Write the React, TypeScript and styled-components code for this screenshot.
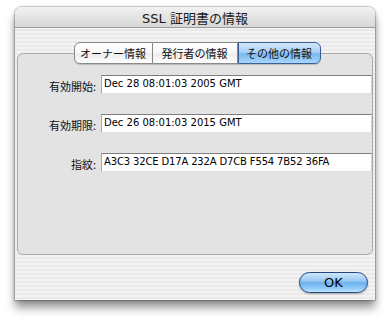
import React from 'react';
import styled, { createGlobalStyle } from 'styled-components';

const GlobalStyle = createGlobalStyle`
  html, body {
    margin: 0;
    padding: 0;
    background: #ffffff;
  }
  body {
    font-family: "Lucida Grande", "DejaVu Sans", "Noto Sans CJK JP", sans-serif;
  }
`;

const Page = styled.div`
  width: 390px;
  height: 317px;
  padding: 7px 0 0 15px;
  box-sizing: border-box;
  overflow: hidden;
`;

const Window = styled.div`
  width: 360px;
  height: 293px;
  border-radius: 7px 7px 0 0;
  background: repeating-linear-gradient(
    to bottom,
    #f3f3f3 0px,
    #f3f3f3 2px,
    #eaeaea 2px,
    #eaeaea 4px
  );
  box-shadow: 0 0 0 1px rgba(0, 0, 0, 0.15), 0 8px 10px rgba(0, 0, 0, 0.4),
    0 1px 4px rgba(0, 0, 0, 0.25);
  display: flex;
  flex-direction: column;
`;

const TitleBar = styled.div`
  height: 22px;
  border-radius: 7px 7px 0 0;
  background: linear-gradient(to bottom, #f2f2f2 0%, #e4e4e4 50%, #d8d8d8 100%);
  border-bottom: 1px solid #9c9c9c;
  display: flex;
  align-items: center;
  justify-content: center;
  font-size: 13px;
  color: #1a1a1a;
`;

const Body = styled.div`
  flex: 1;
  display: flex;
  flex-direction: column;
  padding: 14px 2px 7px 2px;
`;

const TabStrip = styled.div`
  display: flex;
  justify-content: center;
  margin: 0 0 -11px 4px;
  position: relative;
  z-index: 1;
`;

const Tab = styled.div<{ $active?: boolean; $first?: boolean; $last?: boolean }>`
  height: 20px;
  display: flex;
  align-items: center;
  justify-content: center;
  width: ${(p) => (p.$first ? '77px' : p.$last ? '81px' : '84px')};
  font-family: "Noto Sans CJK JP", sans-serif;
  font-size: 11px;
  color: #111;
  border: 1px solid ${(p) => (p.$active ? '#3b5f95' : '#8a8a8a')};
  border-left: ${(p) => (p.$first || p.$active ? undefined : 'none')};
  border-radius: ${(p) =>
    p.$first ? '6px 0 0 6px' : p.$last ? '0 6px 6px 0' : '0'};
  background: ${(p) =>
    p.$active
      ? 'linear-gradient(to bottom, #d2e7fb 0%, #a9d0f5 45%, #7cb8ef 55%, #a6d6fb 100%)'
      : 'linear-gradient(to bottom, #ffffff 0%, #f6f6f6 50%, #ececec 55%, #ffffff 100%)'};
  box-shadow: 0 1px 1px rgba(0, 0, 0, 0.18);
`;

const GroupBox = styled.div`
  height: 202px;
  border: 1px solid #a9a9a9;
  border-radius: 6px;
  background: #e3e3e3;
  padding: 20px 0 0 0;
  display: flex;
  flex-direction: column;
  gap: 19px;
  box-sizing: border-box;
`;

const Row = styled.div`
  display: grid;
  grid-template-columns: 78px 1fr;
  column-gap: 5px;
  align-items: center;
`;

const Label = styled.div`
  text-align: right;
  font-family: "Noto Sans CJK JP", sans-serif;
  font-size: 11px;
  color: #111;
  padding-top: 4px;
`;

const Field = styled.div<{ $tight?: boolean }>`
  height: 19px;
  background: #ffffff;
  border-top: 1px solid #7e7e7e;
  border-left: 1px solid #a8a8a8;
  border-right: 1px solid #d2d2d2;
  border-bottom: 1px solid #e0e0e0;
  box-sizing: border-box;
  padding: 2px 0 0 2px;
  font-family: "Lucida Grande", "DejaVu Sans", sans-serif;
  font-size: 10px;
  letter-spacing: ${(p) => (p.$tight ? '-0.15px' : '0')};
  color: #000;
  white-space: nowrap;
  overflow: hidden;
`;

const Footer = styled.div`
  display: flex;
  justify-content: flex-end;
  padding: 17px 5px 0 0;
`;

const OkButton = styled.button`
  width: 69px;
  height: 21px;
  border-radius: 11px;
  border: 1px solid #22467e;
  background: linear-gradient(
    to bottom,
    #cfe6fb 0%,
    #9ccbf3 40%,
    #6cb0ec 52%,
    #8fcaf8 80%,
    #c4e6ff 100%
  );
  box-shadow: 0 1px 2px rgba(0, 0, 0, 0.3);
  font-family: "Lucida Grande", "DejaVu Sans", sans-serif;
  font-size: 13px;
  color: #000;
  padding: 0;
  display: flex;
  align-items: center;
  justify-content: center;
`;

const rows = [
  { label: '有効開始:', value: 'Dec 28 08:01:03 2005 GMT' },
  { label: '有効期限:', value: 'Dec 26 08:01:03 2015 GMT' },
  { label: '指紋:', value: 'A3C3 32CE D17A 232A D7CB F554 7B52 36FA', tight: true },
];

const App = () => {
  return (
    <Page>
      <GlobalStyle />
      <Window>
        <TitleBar>SSL 証明書の情報</TitleBar>
        <Body>
          <TabStrip>
            <Tab $first>オーナー情報</Tab>
            <Tab>発行者の情報</Tab>
            <Tab $last $active>その他の情報</Tab>
          </TabStrip>
          <GroupBox>
            {rows.map((r) => (
              <Row key={r.label}>
                <Label>{r.label}</Label>
                <Field $tight={r.tight}>{r.value}</Field>
              </Row>
            ))}
          </GroupBox>
          <Footer>
            <OkButton>OK</OkButton>
          </Footer>
        </Body>
      </Window>
    </Page>
  );
};

export default App;
